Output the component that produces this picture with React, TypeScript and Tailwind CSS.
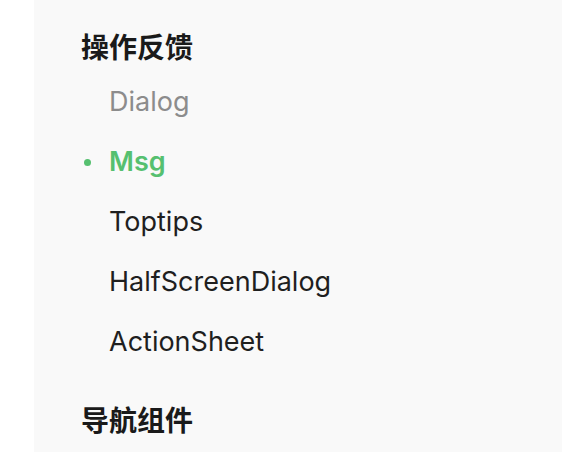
export default function App() {
  const groups = [
    {
      title: "操作反馈",
      items: ["Dialog", "Msg", "Toptips", "HalfScreenDialog", "ActionSheet"],
    },
    { title: "导航组件", items: [] as string[] },
  ];
  const active = "Msg";
  const visited = ["Dialog"];

  return (
    <div
      className="flex h-[452px] w-[562px] overflow-hidden bg-[#f9f9f9]"
      style={{ fontFamily: 'Inter, "Noto Sans CJK SC", sans-serif' }}
    >
      {/* left page edge */}
      <div className="w-[34px] shrink-0 bg-white" />
      <div className="flex-1 pl-[47px] pt-[30px]">
        {groups.map((g) => (
          <div key={g.title} className="mb-[31px]">
            <h2 className="h-[36px] text-[28px] leading-[36px] font-semibold text-[#1a1a1a]">{g.title}</h2>
            <ul className="mt-[6px]">
              {g.items.map((item) => {
                const isActive = item === active;
                const isVisited = visited.includes(item);
                return (
                  <li key={item} className="relative flex h-[60px] items-center pl-[28px] text-[27px]">
                    {isActive && (
                      <span className="absolute left-[3px] top-[27px] h-[7px] w-[7px] rounded-full bg-[#56c070]" />
                    )}
                    <span
                      className={
                        isActive
                          ? "font-semibold text-[#56c070]"
                          : isVisited
                            ? "text-[#8c8c8c]"
                            : "text-[#1f1f1f]"
                      }
                    >
                      {item}
                    </span>
                  </li>
                );
              })}
            </ul>
          </div>
        ))}
      </div>
    </div>
  );
}
